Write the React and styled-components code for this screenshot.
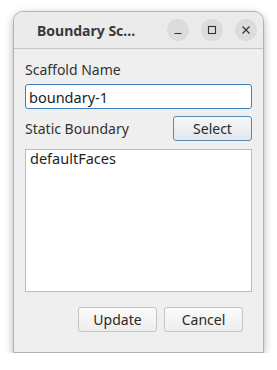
import React from "react";
import styled, { createGlobalStyle } from "styled-components";

const Global = createGlobalStyle`
  html, body { margin: 0; padding: 0; background: #ffffff; }
  body { font-family: "Noto Sans", "DejaVu Sans", sans-serif; }
`;

const Page = styled.div`
  padding: 11px 0 0 13px;
`;

const Window = styled.div`
  width: 251px;
  height: 342px;
  box-sizing: border-box;
  border: 1px solid #b2b2b2;
  border-radius: 10px 10px 0 0;
  background: #efefef;
  box-shadow: 0 3px 9px rgba(0, 0, 0, 0.3);
  display: flex;
  flex-direction: column;
  overflow: hidden;
`;

const TitleBar = styled.div`
  height: 36px;
  flex: none;
  display: flex;
  align-items: center;
  padding: 0 6px 0 23px;
  background: #ebebeb;
  border-bottom: 1px solid #c6c6c6;
`;

const Title = styled.div`
  flex: 1;
  font-size: 14px;
  font-weight: 700;
  color: #3a3a3a;
  white-space: nowrap;
`;

const Controls = styled.div`
  display: flex;
  gap: 12px;
`;

const CtlButton = styled.div`
  width: 22px;
  height: 22px;
  border-radius: 50%;
  background: #dcdcdc;
  display: flex;
  align-items: center;
  justify-content: center;
`;

const Body = styled.div`
  flex: 1;
  display: flex;
  flex-direction: column;
  padding: 12px 11px 0 11px;
`;

const Label = styled.div`
  font-size: 14px;
  line-height: 18px;
  color: #333;
`;

const Input = styled.div`
  margin-top: 5px;
  height: 25px;
  box-sizing: border-box;
  border: 1px solid #3d7fbd;
  border-radius: 3px;
  background: #fff;
  display: flex;
  align-items: center;
  padding-left: 3px;
  font-size: 14.5px;
  color: #1e1e1e;
`;

const Row = styled.div`
  margin-top: 7px;
  display: flex;
  align-items: center;
  justify-content: space-between;
`;

const Button = styled.div`
  width: 79px;
  height: 25px;
  box-sizing: border-box;
  border-radius: 3px;
  display: flex;
  align-items: center;
  justify-content: center;
  font-size: 14px;
  color: #2a2a2a;
  border: 1px solid ${(p) => (p.$accent ? "#5a8ab3" : "#c3c3c3")};
  background: ${(p) =>
    p.$accent
      ? "linear-gradient(#f6f8fa, #e1e7ec)"
      : "linear-gradient(#fbfbfb, #ededed)"};
`;

const List = styled.div`
  margin-top: 8px;
  height: 143px;
  box-sizing: border-box;
  border: 1px solid #bcbcbc;
  background: #fff;
  padding: 0 4px;
  font-size: 14.5px;
  line-height: 17px;
  color: #1e1e1e;
`;

const Footer = styled.div`
  margin-top: 15px;
  display: flex;
  justify-content: flex-end;
  gap: 7px;
  padding-right: 9px;
`;

export default function App() {
  return (
    <>
      <Global />
      <Page>
        <Window>
          <TitleBar>
            <Title>Boundary Sc...</Title>
            <Controls>
              <CtlButton>
                <svg width="10" height="10" viewBox="0 0 10 10">
                  <path d="M1.5 8.5h7" stroke="#333" strokeWidth="1.2" />
                </svg>
              </CtlButton>
              <CtlButton>
                <svg width="10" height="10" viewBox="0 0 10 10">
                  <rect x="1.5" y="1.5" width="7" height="7" fill="none" stroke="#333" strokeWidth="1.1" />
                </svg>
              </CtlButton>
              <CtlButton>
                <svg width="10" height="10" viewBox="0 0 10 10">
                  <path d="M1.5 1.5l7 7M8.5 1.5l-7 7" stroke="#333" strokeWidth="1.2" />
                </svg>
              </CtlButton>
            </Controls>
          </TitleBar>
          <Body>
            <Label>Scaffold Name</Label>
            <Input>boundary-1</Input>
            <Row>
              <Label>Static Boundary</Label>
              <Button $accent>Select</Button>
            </Row>
            <List>defaultFaces</List>
            <Footer>
              <Button>Update</Button>
              <Button>Cancel</Button>
            </Footer>
          </Body>
        </Window>
      </Page>
    </>
  );
}
